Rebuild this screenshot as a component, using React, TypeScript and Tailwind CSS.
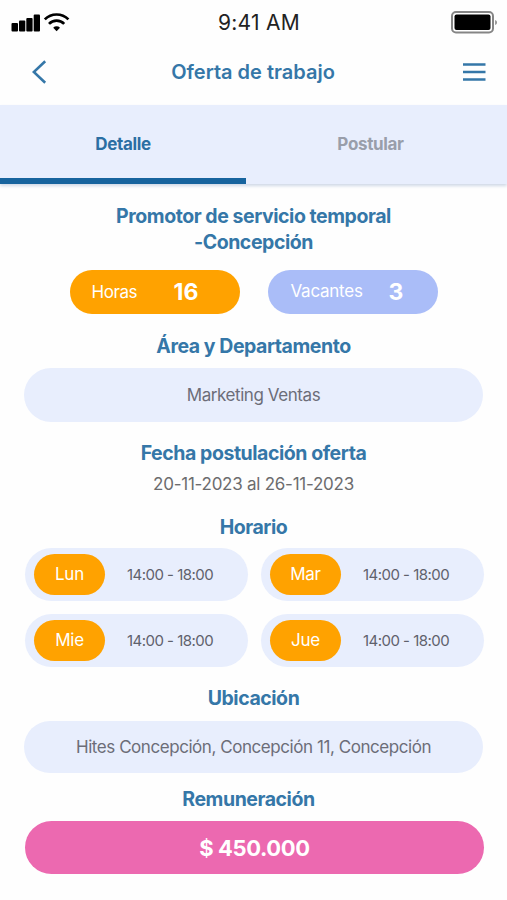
import React from 'react'

const schedule = [
  { day: 'Lun', hours: '14:00 - 18:00' },
  { day: 'Mar', hours: '14:00 - 18:00' },
  { day: 'Mie', hours: '14:00 - 18:00' },
  { day: 'Jue', hours: '14:00 - 18:00' },
]

function StatusBar() {
  return (
    <div className="flex h-11 items-center justify-between pl-[11px] pr-[9px]">
      <svg width="60" height="20" viewBox="0 0 60 20" className="text-black">
        <rect x="0.5" y="11" width="6.5" height="8.5" rx="1" fill="currentColor" />
        <rect x="8" y="8.5" width="6.3" height="11" rx="1" fill="currentColor" />
        <rect x="15.3" y="6" width="6.3" height="13.5" rx="1" fill="currentColor" />
        <rect x="22.7" y="2.5" width="6.3" height="17" rx="1" fill="currentColor" />
        <g fill="none" stroke="currentColor" strokeWidth="2.7">
          <path d="M33.8 7.4a16.6 16.6 0 0 1 23.6 0" />
          <path d="M38 11.9a10.6 10.6 0 0 1 15.2 0" />
        </g>
        <path d="M45.6 19.2l-3.4-3.5a4.8 4.8 0 0 1 6.8 0z" fill="currentColor" />
      </svg>
      <span className="mr-[4px] text-[21px] leading-none tracking-[0.012em] text-[#222]">9:41 AM</span>
      <svg width="47" height="23" viewBox="0 0 47 23">
        <rect x="1" y="1" width="41" height="20.5" rx="4" fill="#fff" stroke="#858585" strokeWidth="2" />
        <rect x="3.5" y="3.5" width="36" height="15.5" rx="2" fill="#000" />
        <path d="M44.2 9v5c1.2-.5 1.7-1.4 1.7-2.5s-.5-2-1.7-2.5z" fill="#858585" />
      </svg>
    </div>
  )
}

function Header() {
  return (
    <header className="flex h-[61px] items-center justify-between pb-[5px] pl-8 pr-[21px] text-[#3577a8]">
      <svg width="15" height="24" viewBox="0 0 15 24" fill="none" stroke="currentColor" strokeWidth="2.6">
        <path d="M13.2 1.3L1.8 12l11.4 10.7" />
      </svg>
      <h1 className="mr-1 text-[20px] font-semibold">Oferta de trabajo</h1>
      <svg width="23" height="18" viewBox="0 0 23 18" fill="none" stroke="currentColor" strokeWidth="2.5">
        <path d="M0 1.5h22.5M0 9h22.5M0 16.5h22.5" />
      </svg>
    </header>
  )
}

function Heading({ children }: { children: React.ReactNode }) {
  return (
    <h2 className="text-center text-[19.5px] font-bold leading-[26px] tracking-[-0.023em] text-[#3577a8]">
      {children}
    </h2>
  )
}

export default function App() {
  return (
    <div className="h-[900px] w-[507px] overflow-hidden bg-[#fefefe] font-['Inter',sans-serif]">
      <StatusBar />
      <Header />

      <nav className="flex h-[79px] bg-[#e8eefd] text-[17px] tracking-[-0.02em] shadow-[0_2px_3px_#cfd8e6]">
        <button className="w-[246px] border-b-6 border-[#17649e] pt-[7px] font-bold text-[#2b6ea3]">Detalle</button>
        <button className="flex-1 pr-3 pt-px font-bold text-[#999eaa]">Postular</button>
      </nav>

      <main className="px-6 pt-[19px]">
        <Heading>
          Promotor de servicio temporal
          <br />
          -Concepción
        </Heading>

        <div className="mt-[15px] flex justify-center gap-7 text-white">
          <div className="flex h-[44px] w-[170px] items-center rounded-full bg-[#ffa200] pl-[22px]">
            <span className="w-[82px] pt-0.5 text-[17px] tracking-tight">Horas</span>
            <span className="text-[23px] font-bold">16</span>
          </div>
          <div className="flex h-[44px] w-[170px] items-center rounded-full bg-[#aabdf8] pl-[23px]">
            <span className="w-[98px] text-[17px] tracking-[-0.015em]">Vacantes</span>
            <span className="text-[23px] font-bold">3</span>
          </div>
        </div>

        <div className="mt-[19px]">
          <Heading>Área y Departamento</Heading>
          <div className="mt-[9px] flex h-[54px] items-center justify-center rounded-full bg-[#e8eefd] pt-0.5 text-[17px] tracking-tight text-[#6c6d78]">
            Marketing Ventas
          </div>
        </div>

        <div className="mt-[18px]">
          <Heading>Fecha postulación oferta</Heading>
          <p className="mt-[5px] text-center text-[17px] leading-[26px] tracking-[-0.015em] text-[#6c6c6e]">
            20-11-2023 al 26-11-2023
          </p>
        </div>

        <div className="mt-[17px]">
          <Heading>Horario</Heading>
          <div className="-mr-px ml-px mt-[8px] grid grid-cols-2 gap-[13px]">
            {schedule.map((item) => (
              <div key={item.day} className="flex h-[53px] items-center rounded-full bg-[#e8eefd] pl-[9px]">
                <span className="flex h-[41px] w-[71px] items-center justify-center rounded-full bg-[#ffa200] pt-px text-[17px] tracking-[-0.015em] text-white">
                  {item.day}
                </span>
                <span className="ml-[22px] pt-0.5 text-[15px] tracking-[-0.035em] text-[#5f616c]">{item.hours}</span>
              </div>
            ))}
          </div>
        </div>

        <div className="mt-[18px]">
          <Heading>Ubicación</Heading>
          <div className="mt-[10px] flex h-[52px] items-center justify-center rounded-full bg-[#e8eefd] pt-px text-[17px] tracking-[-0.026em] text-[#6c6d78]">
            Hites Concepción, Concepción 11, Concepción
          </div>
        </div>

        <div className="mt-[13px]">
          <div className="pr-[10px]">
            <Heading>Remuneración</Heading>
          </div>
          <div className="-mr-px ml-px mt-[9px] flex h-[53px] items-center justify-center rounded-full bg-[#ec69b0] pt-px text-[22px] font-bold tracking-[-0.018em] text-white">
            $ 450.000
          </div>
        </div>
      </main>
    </div>
  )
}
